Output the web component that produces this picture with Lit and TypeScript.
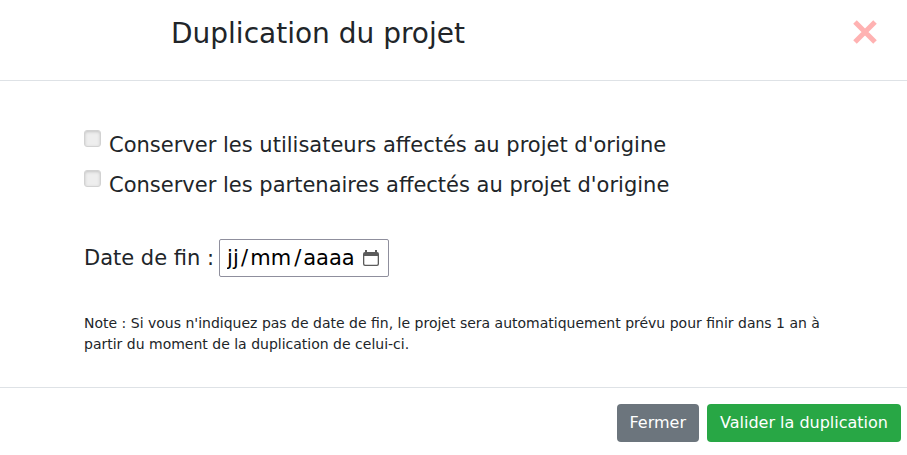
import { LitElement, html, css } from "lit";
import { customElement } from "lit/decorators.js";

@customElement("app-root")
export class AppRoot extends LitElement {
  static styles = css`
    :host {
      display: block;
      background: #fff;
      color: #212529;
      font-family: "DejaVu Sans", sans-serif;
      font-size: 21px;
      line-height: 32px;
    }
    * {
      box-sizing: border-box;
    }
    .header {
      display: flex;
      align-items: flex-start;
      justify-content: space-between;
      padding: 13px 30px 25px 171px;
      border-bottom: 1px solid #dee2e6;
    }
    .title {
      margin: 0;
      font-size: 28px;
      font-weight: 400;
      line-height: 42px;
    }
    .close {
      display: block;
      margin-top: 7px;
      padding: 0;
      border: 0;
      background: none;
      cursor: pointer;
    }
    .close svg,
    .calendar svg {
      display: block;
    }
    .body {
      padding: 48px 84px 32px;
    }
    .option {
      display: flex;
      align-items: flex-start;
      gap: 8px;
      margin-bottom: 8px;
    }
    .option label {
      flex: 1;
    }
    .check {
      appearance: none;
      flex: none;
      width: 17px;
      height: 17px;
      margin: 1px 0 0;
      border: 1px solid #d2d2d2;
      border-radius: 3px;
      background: #eee;
      box-shadow: inset 0 1px 3px #c4c4c4;
    }
    .check:checked {
      background: #6c757d;
    }
    .date {
      display: flex;
      align-items: center;
      gap: 5px;
      margin-top: 38px;
    }
    .field {
      display: flex;
      align-items: center;
      gap: 2px;
      width: 170px;
      height: 38px;
      padding: 0 9px 0 5px;
      border: 1px solid #8f8f9d;
      border-radius: 2px;
      color: #000;
    }
    .part {
      padding: 0;
      border: 0;
      outline: 0;
      background: none;
      color: inherit;
      font: inherit;
    }
    .part::placeholder {
      color: inherit;
      opacity: 1;
    }
    .day {
      width: 14px;
      padding-left: 2px;
    }
    .month {
      width: 42px;
    }
    .year {
      width: 53px;
    }
    .calendar {
      margin-left: auto;
      padding: 0;
      border: 0;
      background: none;
    }
    .note {
      margin: 36px 0 0;
      font-size: 14px;
      line-height: 21px;
    }
    .footer {
      display: flex;
      justify-content: flex-end;
      gap: 8px;
      padding: 16px 6px 13px;
      border-top: 1px solid #dee2e6;
    }
    .btn {
      height: 38px;
      padding: 0 13px;
      border: 0;
      border-radius: 4px;
      color: #fff;
      font-family: inherit;
      font-size: 16px;
      line-height: 24px;
      cursor: pointer;
    }
    .secondary {
      background: #6c757d;
    }
    .success {
      background: #28a745;
    }
  `;

  render() {
    return html`
      <header class="header">
        <h1 class="title">Duplication du projet</h1>
        <button class="close" type="button" aria-label="Fermer la fenêtre">
          <svg width="24" height="24" viewBox="0 0 24 24">
            <path d="M2 2 22 22M22 2 2 22" fill="none" stroke="#ffb2b2" stroke-width="5" />
          </svg>
        </button>
      </header>
      <main class="body">
        <div class="option">
          <input class="check" type="checkbox" id="users" />
          <label for="users">Conserver les utilisateurs affectés au projet d'origine</label>
        </div>
        <div class="option">
          <input class="check" type="checkbox" id="partners" />
          <label for="partners">Conserver les partenaires affectés au projet d'origine</label>
        </div>
        <div class="date">
          <label for="day">Date de fin :</label>
          <div class="field">
            <input class="part day" type="text" id="day" inputmode="numeric" placeholder="jj" />
            <span>/</span>
            <input class="part month" type="text" aria-label="Mois" inputmode="numeric" placeholder="mm" />
            <span>/</span>
            <input class="part year" type="text" aria-label="Année" inputmode="numeric" placeholder="aaaa" />
            <button class="calendar" type="button" aria-label="Choisir une date">
              <svg width="16" height="16" viewBox="0 0 16 16">
                <path
                  fill="#5b5b5b"
                  fill-rule="evenodd"
                  d="M2 0h2v2h8V0h2v2a2 2 0 0 1 2 2V14a2 2 0 0 1-2 2H2a2 2 0 0 1-2-2V4a2 2 0 0 1 2-2ZM1.300 6v7.700a1 1 0 0 0 1 1h11.400a1 1 0 0 0 1-1V6Z"
                />
              </svg>
            </button>
          </div>
        </div>
        <p class="note">
          Note : Si vous n'indiquez pas de date de fin, le projet sera automatiquement prévu pour finir dans 1 an à
          partir du moment de la duplication de celui-ci.
        </p>
      </main>
      <footer class="footer">
        <button class="btn secondary" type="button">Fermer</button>
        <button class="btn success" type="button">Valider la duplication</button>
      </footer>
    `;
  }
}
